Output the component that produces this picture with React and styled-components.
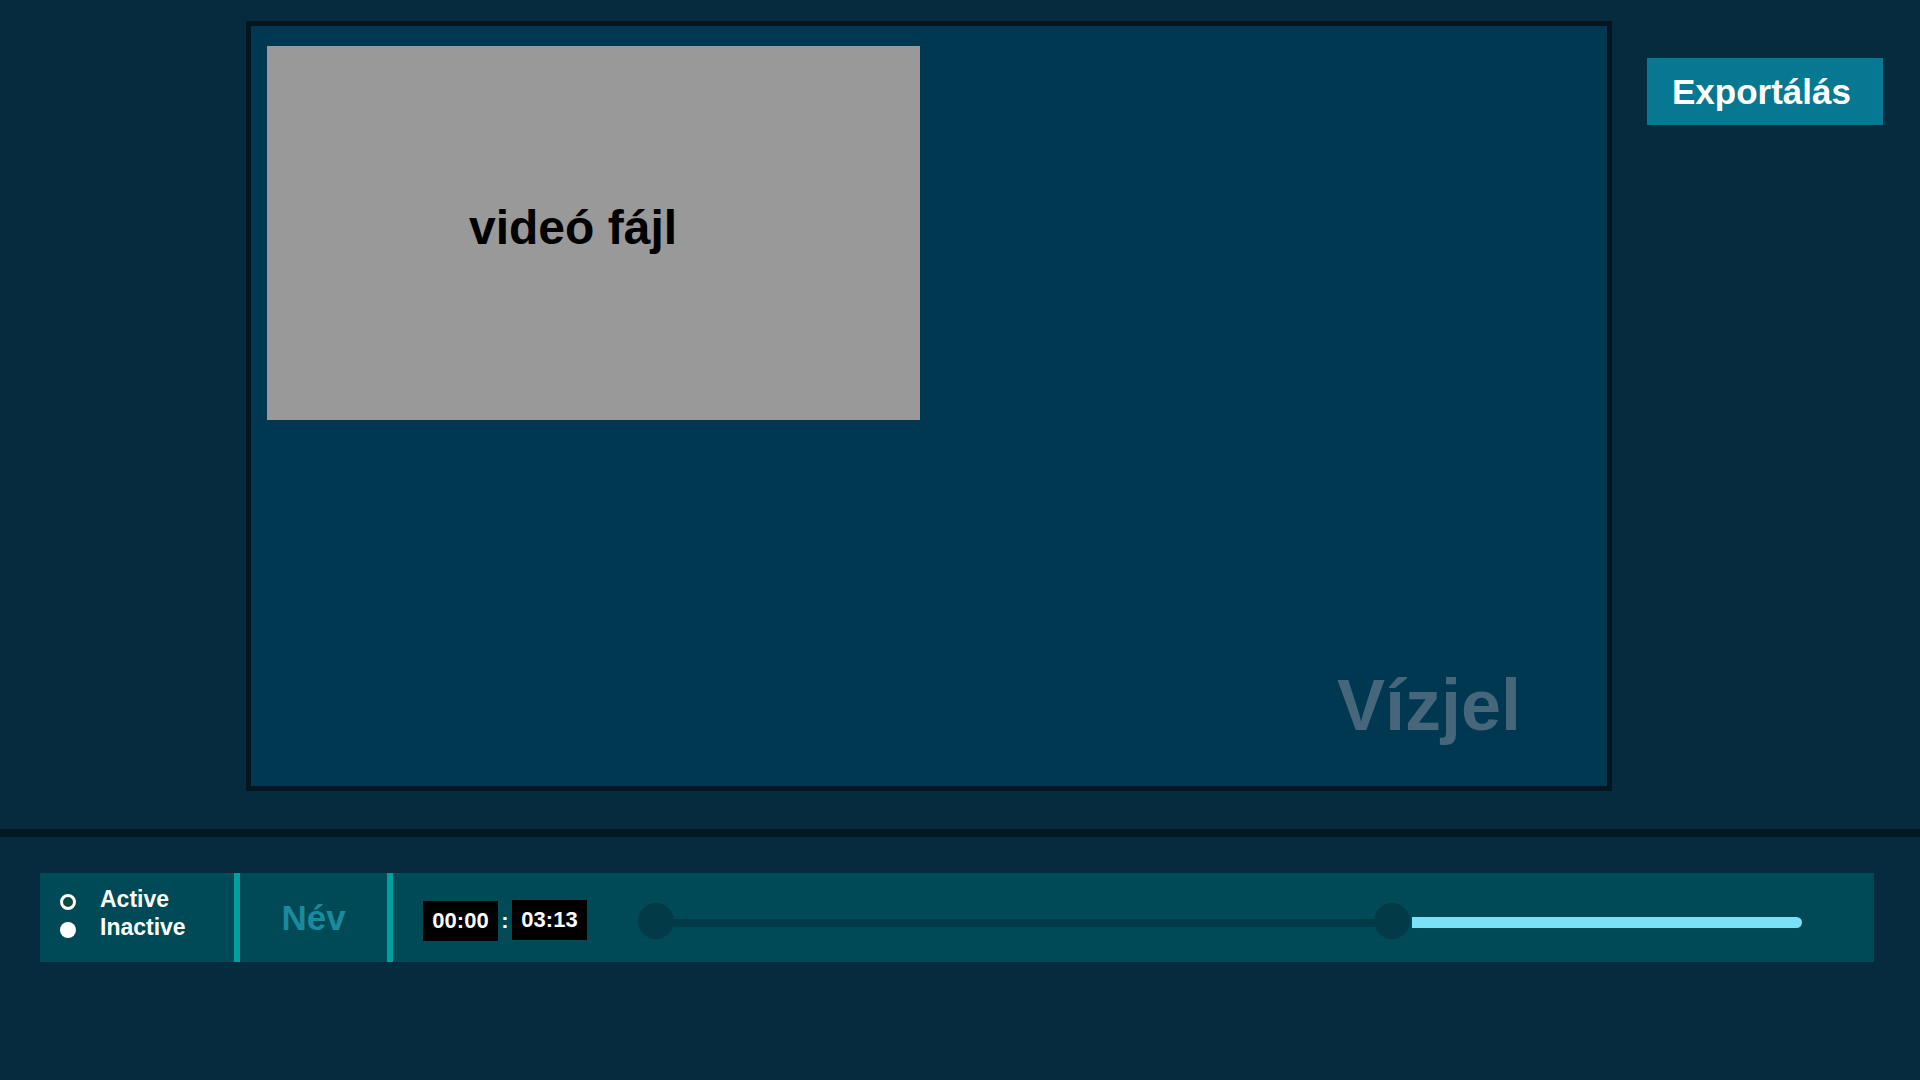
import React from 'react';
import styled, { createGlobalStyle } from 'styled-components';

const GlobalStyle = createGlobalStyle`
  html, body {
    margin: 0;
    padding: 0;
    background: #072b3e;
    font-family: "Liberation Sans", Arial, sans-serif;
  }
  * { box-sizing: border-box; }
`;

const Page = styled.div`
  width: 1920px;
  height: 1080px;
  background: #072b3e;
  overflow: hidden;
`;

const TopArea = styled.section`
  height: 829px;
  display: flex;
  align-items: flex-start;
  gap: 35px;
  padding: 21px 0 0 246px;
`;

const Preview = styled.div`
  width: 1366px;
  height: 770px;
  border: 5px solid #03161f;
  background: #003852;
  display: flex;
  flex-direction: column;
`;

const VideoBox = styled.div`
  width: 653px;
  height: 374px;
  margin: 20px 0 0 16px;
  background: #999999;
  padding: 158px 0 0 202px;
`;

const VideoLabel = styled.span`
  display: block;
  font-size: 48px;
  line-height: 1;
  font-weight: 700;
  color: #000;
`;

const Watermark = styled.div`
  align-self: flex-end;
  margin: auto 86px 45px 0;
  font-size: 72px;
  line-height: 1;
  font-weight: 700;
  color: #45667b;
`;

const ExportButton = styled.button`
  margin-top: 37px;
  width: 236px;
  height: 67px;
  border: none;
  padding: 0 0 0 25px;
  background: #067891;
  color: #fff;
  font-family: inherit;
  font-size: 35px;
  font-weight: 700;
  text-align: left;
  cursor: pointer;
`;

const Separator = styled.div`
  height: 8px;
  background: #021822;
`;

const Bar = styled.section`
  margin: 36px 46px 0 40px;
  height: 89px;
  background: #004a57;
  display: flex;
  align-items: center;
`;

const RadioGroup = styled.div`
  align-self: stretch;
  width: 194px;
  padding: 12px 0 0 20px;
  display: flex;
  flex-direction: column;
`;

const RadioRow = styled.label`
  display: flex;
  align-items: center;
  gap: 24px;
  height: 28px;
  font-size: 23px;
  line-height: 28px;
  font-weight: 700;
  color: #fff;
`;

const RadioDot = styled.span`
  width: 16px;
  height: 16px;
  margin-top: 6px;
  border-radius: 50%;
  background: ${p => (p.$checked ? '#0f4a3c' : '#fff')};
  border: ${p => (p.$checked ? '3px solid #fff' : 'none')};
`;

const Divider = styled.div`
  align-self: stretch;
  width: 6px;
  background: #00a09c;
`;

const NameCell = styled.div`
  align-self: stretch;
  width: 147px;
  display: flex;
  align-items: center;
  justify-content: center;
  font-size: 35px;
  line-height: 1;
  font-weight: 700;
  color: #1a8a9e;
`;

const TimeGroup = styled.div`
  display: flex;
  align-items: center;
  margin: 6px 0 0 30px;
`;

const TimeBox = styled.div`
  width: 75px;
  height: 40px;
  margin-top: ${p => (p.$lift ? '-2px' : '0')};
  background: #000;
  color: #fff;
  display: flex;
  align-items: center;
  justify-content: center;
  font-size: 22px;
  font-weight: 700;
`;

const Colon = styled.span`
  width: 14px;
  text-align: center;
  color: #fff;
  font-size: 22px;
  font-weight: 700;
`;

const Slider = styled.div`
  display: flex;
  align-items: center;
  margin: 7px 0 0 51px;
`;

const Knob = styled.span`
  width: 36px;
  height: 36px;
  border-radius: 50%;
  background: #023a47;
  flex-shrink: 0;
`;

const Track = styled.span`
  width: 700px;
  height: 8px;
  margin-top: 4px;
  background: #023a47;
`;

const Fill = styled.span`
  width: 390px;
  height: 11px;
  margin: 3px 0 0 2px;
  background: #7ae2f8;
  border-radius: 0 6px 6px 0;
`;

export default function App() {
  return (
    <Page>
      <GlobalStyle />
      <TopArea>
        <Preview>
          <VideoBox>
            <VideoLabel>videó fájl</VideoLabel>
          </VideoBox>
          <Watermark>Vízjel</Watermark>
        </Preview>
        <ExportButton>Exportálás</ExportButton>
      </TopArea>
      <Separator />
      <Bar>
        <RadioGroup>
          <RadioRow>
            <RadioDot $checked />
            Active
          </RadioRow>
          <RadioRow>
            <RadioDot />
            Inactive
          </RadioRow>
        </RadioGroup>
        <Divider />
        <NameCell>Név</NameCell>
        <Divider />
        <TimeGroup>
          <TimeBox>00:00</TimeBox>
          <Colon>:</Colon>
          <TimeBox $lift>03:13</TimeBox>
        </TimeGroup>
        <Slider>
          <Knob />
          <Track />
          <Knob />
          <Fill />
        </Slider>
      </Bar>
    </Page>
  );
}
